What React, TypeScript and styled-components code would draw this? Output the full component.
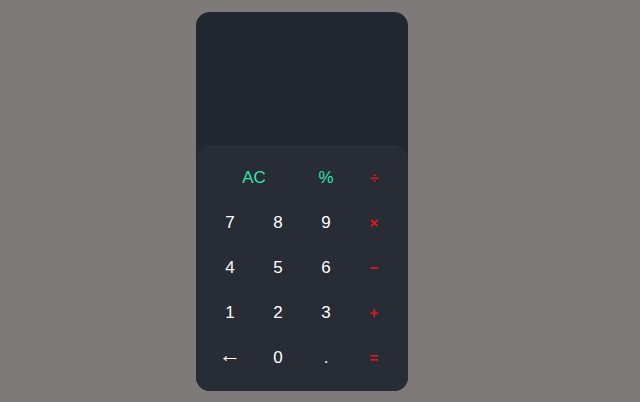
import styled, { createGlobalStyle } from "styled-components";

const GlobalStyle = createGlobalStyle`
  html, body {
    margin: 0;
    padding: 0;
    background: #7e7a7a;
    font-family: "Liberation Sans", Arial, sans-serif;
  }
`;

type Kind = "num" | "fn" | "op" | "back";

interface Key {
  label: string;
  kind: Kind;
  wide?: boolean;
}

const keys: Key[] = [
  { label: "AC", kind: "fn", wide: true },
  { label: "%", kind: "fn" },
  { label: "÷", kind: "op" },
  { label: "7", kind: "num" },
  { label: "8", kind: "num" },
  { label: "9", kind: "num" },
  { label: "×", kind: "op" },
  { label: "4", kind: "num" },
  { label: "5", kind: "num" },
  { label: "6", kind: "num" },
  { label: "−", kind: "op" },
  { label: "1", kind: "num" },
  { label: "2", kind: "num" },
  { label: "3", kind: "num" },
  { label: "+", kind: "op" },
  { label: "←", kind: "back" },
  { label: "0", kind: "num" },
  { label: ".", kind: "num" },
  { label: "=", kind: "op" },
];

const colors: Record<Kind, string> = {
  num: "#ffffff",
  back: "#ffffff",
  fn: "#2fe3b3",
  op: "#e0161c",
};

const sizes: Record<Kind, string> = {
  num: "17px",
  back: "22px",
  fn: "17px",
  op: "15px",
};

export default function App() {
  return (
    <>
      <GlobalStyle />
      <Page>
        <Calculator>
          <Display />
          <Keypad>
            {keys.map((key, idx) => (
              <Button key={idx} kind={key.kind} wide={key.wide}>
                {key.label}
              </Button>
            ))}
          </Keypad>
        </Calculator>
      </Page>
    </>
  );
}

const Page = styled.div`
  width: 640px;
  height: 402px;
  padding: 12px 0 0 196px;
  box-sizing: border-box;
`;

const Calculator = styled.div`
  width: 212px;
  height: 379px;
  display: flex;
  flex-direction: column;
  background: #22262e;
  border-radius: 14px;
  overflow: hidden;
`;

const Display = styled.div`
  height: 133px;
  flex-shrink: 0;
`;

const Keypad = styled.div`
  flex: 1;
  display: grid;
  grid-template-columns: repeat(4, 40px);
  grid-auto-rows: 40px;
  column-gap: 8px;
  row-gap: 5px;
  padding: 12px 14px 14px;
  background: #282c34;
  border-radius: 14px 14px 0 0;
`;

const Button = styled.div<{ kind: Kind; wide?: boolean }>`
  grid-column: ${(props) => (props.wide ? "span 2" : "auto")};
  display: flex;
  align-items: center;
  justify-content: center;
  padding-bottom: ${(props) => (props.kind === "back" ? "4px" : "0")};
  box-sizing: border-box;
  border-radius: 6px;
  background: #282c34;
  box-shadow: 0 0 2px rgba(0, 0, 0, 0.05);
  color: ${(props) => colors[props.kind]};
  font-size: ${(props) => sizes[props.kind]};
  font-weight: ${(props) => (props.kind === "op" ? 700 : 400)};
  line-height: 1;
`;
